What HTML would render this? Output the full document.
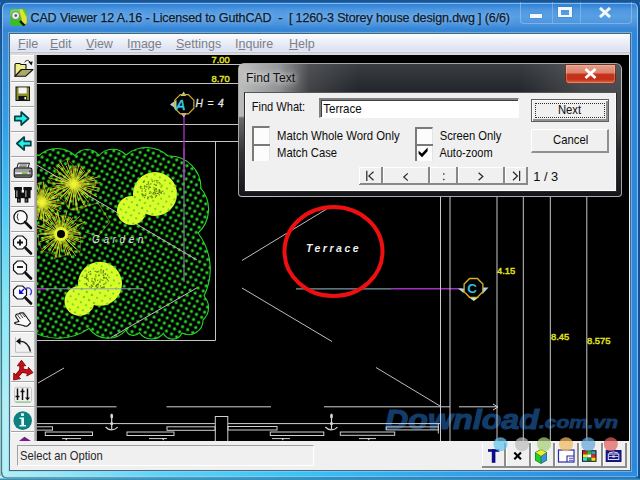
<!DOCTYPE html>
<html><head><meta charset="utf-8"><style>
*{margin:0;padding:0;box-sizing:border-box}
html,body{width:640px;height:480px;overflow:hidden;background:#1d5a9a}
body{position:relative;font-family:"Liberation Sans",sans-serif}
.a{position:absolute}
.menu{left:10px;top:34px;width:620px;height:19px;background:linear-gradient(to bottom,#fdfdff 0,#eef0f8 40%,#dde2f2 90%,#e4e8f6 100%);border-bottom:1px solid #c4c6ce;box-shadow:0 2px 0 #dadada}
.mi{top:37px;font-size:12.5px;color:#7a7f88;letter-spacing:0}
.mi u{text-decoration:underline;text-underline-offset:1px}
.draw{left:37px;top:55px;width:592px;height:386px;background:#000;overflow:hidden}
.status{left:10px;top:441px;width:620px;height:29px;background:#f0f0f0}
</style></head><body>
<svg class="a" style="left:0;top:0" width="640" height="480" viewBox="0 0 640 480">
 <defs>
  <linearGradient id="fgL" x1="0" y1="30" x2="0" y2="480" gradientUnits="userSpaceOnUse">
   <stop offset="0" stop-color="#3a86d6"/><stop offset="0.218" stop-color="#32a0eb"/><stop offset="0.387" stop-color="#46c8f5"/>
   <stop offset="0.596" stop-color="#84eaf4"/><stop offset="0.831" stop-color="#b0f0f5"/><stop offset="1" stop-color="#b4f0f5"/>
  </linearGradient>
  <linearGradient id="fgL0" x1="0" y1="30" x2="0" y2="480" gradientUnits="userSpaceOnUse">
   <stop offset="0" stop-color="#1a5a9a"/><stop offset="0.218" stop-color="#2878b4"/><stop offset="0.387" stop-color="#3c96be"/>
   <stop offset="0.596" stop-color="#64b4c8"/><stop offset="0.831" stop-color="#96c8cd"/><stop offset="1" stop-color="#98c8cc"/>
  </linearGradient>
  <linearGradient id="fgL1" x1="0" y1="30" x2="0" y2="480" gradientUnits="userSpaceOnUse">
   <stop offset="0" stop-color="#15508e"/><stop offset="0.218" stop-color="#15558e"/><stop offset="0.387" stop-color="#14648c"/>
   <stop offset="0.596" stop-color="#326e78"/><stop offset="0.831" stop-color="#468287"/><stop offset="1" stop-color="#4a7a80"/>
  </linearGradient>
  <linearGradient id="fgB" x1="0" y1="0" x2="1" y2="0">
   <stop offset="0" stop-color="#b4f0f5"/><stop offset="0.08" stop-color="#9ae8f6"/><stop offset="0.25" stop-color="#60d2f6"/>
   <stop offset="0.47" stop-color="#3cc2f5"/><stop offset="0.7" stop-color="#34a4ea"/><stop offset="0.9" stop-color="#2f8ee4"/><stop offset="1" stop-color="#2d8ae2"/>
  </linearGradient>
  <linearGradient id="fgBo" x1="0" y1="0" x2="1" y2="0">
   <stop offset="0" stop-color="#4a7a80"/><stop offset="0.3" stop-color="#2a7aa0"/><stop offset="0.5" stop-color="#14649a"/><stop offset="1" stop-color="#0c4a92"/>
  </linearGradient>
  <linearGradient id="fgT" x1="0" y1="0" x2="0" y2="33" gradientUnits="userSpaceOnUse">
   <stop offset="0" stop-color="#2a78cc"/><stop offset="0.15" stop-color="#3584d8"/><stop offset="0.3" stop-color="#4e98e0"/>
   <stop offset="0.5" stop-color="#58a0e4"/><stop offset="0.72" stop-color="#4c94de"/><stop offset="0.9" stop-color="#3486d6"/><stop offset="1" stop-color="#3a88d6"/>
  </linearGradient>
 </defs>
 <rect x="0" y="0" width="640" height="480" fill="#2e86de"/>
 <rect x="0" y="0" width="640" height="33" fill="url(#fgT)"/>
 <rect x="0" y="30" width="10" height="450" fill="url(#fgL)"/>
 <rect x="0" y="470" width="640" height="10" fill="url(#fgB)"/>
 <!-- outer outline -->
 <path d="M1 40 L1 8 Q1 1 8 1 L632 1 Q639 1 639 8 L639 480" fill="none" stroke="#15508e" stroke-width="2"/>
 <rect x="0" y="30" width="1" height="446" fill="url(#fgL0)"/>
 <rect x="1" y="30" width="1.2" height="444" fill="url(#fgL1)"/>
 <path d="M1.6 472 Q1.6 477.8 7 477.8 L640 477.8" fill="none" stroke="url(#fgBo)" stroke-width="1.3"/>
 <rect x="0" y="0" width="640" height="2.5" fill="#1a5596"/>
 <rect x="0" y="478.5" width="640" height="1.5" fill="#3a90b8"/>
 <!-- inner highlight -->
 <path d="M2.5 472 L2.5 9 Q2.5 3.5 8 3.5 L632 3.5 Q637.5 3.5 637.5 9 L637.5 476 M4 476.8 L636 476.8" fill="none" stroke="rgba(170,220,250,.65)" stroke-width="1"/>
 <path d="M8.5 32.5 L631.5 32.5 L631.5 471.5 L8.5 471.5 Z" fill="none" stroke="rgba(150,210,245,.55)" stroke-width="1"/>
</svg>
<div class="a" style="left:9px;top:33px;width:622px;height:438px;border:1px solid #4a6478;background:#f0f0f0"></div>
<!-- title icon -->
<svg class="a" style="left:10px;top:9px" width="17" height="17" viewBox="0 0 17 17">
 <rect x="0.3" y="0.3" width="16.4" height="16.4" rx="2.5" fill="#38c020"/>
 <path d="M0.3 3 Q0.3 0.3 3 0.3 L12 0.3 L12 7 Q6 9 0.3 7 Z" fill="#70d848"/>
 <path d="M9.5 0.3 L12.5 0.3 L16.7 8 L16.7 14 L13 16.7 Z" fill="#e8e030"/>
 <path d="M12.5 0.3 L14.5 0.3 L16.7 4 L16.7 8 Z" fill="#58c838"/>
 <path d="M10 12 L14.5 16.7" stroke="#111" stroke-width="2.4"/>
 <circle cx="5.6" cy="6.6" r="3.9" fill="#e8eee8" stroke="#7c8c7c" stroke-width="1.1"/>
 <circle cx="5.8" cy="6.6" r="1.3" fill="#505850"/>
</svg>
<div class="a" style="left:30.5px;top:10.5px;font-size:12.5px;letter-spacing:-0.12px;-webkit-text-stroke:0.25px #0c1a2c;color:#0c1a2c;white-space:nowrap;text-shadow:0 0 7px rgba(200,230,255,.55),0 0 3px rgba(200,230,255,.4)">CAD Viewer 12 A.16 - Licensed to GuthCAD&nbsp; - &nbsp;[ 1260-3 Storey house design.dwg ] (6/6)</div>

<!-- caption buttons -->
<div class="a" style="left:520px;top:2px;width:112px;height:22px;border:1px solid rgba(170,200,235,.55);border-top:none;border-radius:0 0 4px 4px"></div>
<div class="a" style="left:552px;top:2px;width:1px;height:21px;background:rgba(160,195,235,.5)"></div>
<div class="a" style="left:580px;top:2px;width:1px;height:21px;background:rgba(160,195,235,.5)"></div>
<div class="a" style="left:530px;top:14px;width:12px;height:4px;background:#f4f8fc;box-shadow:0 0 1px #345"></div>
<div class="a" style="left:558px;top:7px;width:14px;height:10px;border:3px solid #f4f8fc;border-top-width:3px;border-bottom-width:2px;box-shadow:0 0 1px #345"></div>
<svg class="a" style="left:598px;top:7px" width="14" height="11" viewBox="0 0 14 11"><path d="M2 1 L12 10 M12 1 L2 10" stroke="#f4f8fc" stroke-width="3"/></svg>

<!-- menu -->
<div class="a menu"></div>
<div class="a mi" style="left:18px"><u>F</u>ile</div>
<div class="a mi" style="left:50px"><u>E</u>dit</div>
<div class="a mi" style="left:86px"><u>V</u>iew</div>
<div class="a mi" style="left:127px">I<u>m</u>age</div>
<div class="a mi" style="left:176px"><u>S</u>ettings</div>
<div class="a mi" style="left:235px">I<u>n</u>quire</div>
<div class="a mi" style="left:289px"><u>H</u>elp</div>

<!-- toolbar -->
<!-- toolbar -->
<div class="a" style="left:10px;top:55px;width:27px;height:386px;background:#f1f1f1"></div>
<div class="a" style="left:10px;top:55px;width:1px;height:386px;background:#e4e4e4"></div>
<div class="a" style="left:34px;top:55px;width:3px;height:386px;background:linear-gradient(to right,#c8c8c8,#8c8c8c)"></div>
<div class="a" style="left:11px;top:55px;width:23px;height:1px;background:#fff"></div>
<div class="a" style="left:11px;top:81px;width:23px;height:1px;background:#a4a4a4"></div><div class="a" style="left:11px;top:82px;width:23px;height:1px;background:#fff"></div><div class="a" style="left:11px;top:106px;width:23px;height:1px;background:#a4a4a4"></div><div class="a" style="left:11px;top:107px;width:23px;height:1px;background:#fff"></div><div class="a" style="left:11px;top:131px;width:23px;height:1px;background:#a4a4a4"></div><div class="a" style="left:11px;top:132px;width:23px;height:1px;background:#fff"></div><div class="a" style="left:11px;top:156px;width:23px;height:1px;background:#a4a4a4"></div><div class="a" style="left:11px;top:157px;width:23px;height:1px;background:#fff"></div><div class="a" style="left:11px;top:181px;width:23px;height:1px;background:#a4a4a4"></div><div class="a" style="left:11px;top:182px;width:23px;height:1px;background:#fff"></div><div class="a" style="left:11px;top:206px;width:23px;height:1px;background:#a4a4a4"></div><div class="a" style="left:11px;top:207px;width:23px;height:1px;background:#fff"></div><div class="a" style="left:11px;top:231px;width:23px;height:1px;background:#a4a4a4"></div><div class="a" style="left:11px;top:232px;width:23px;height:1px;background:#fff"></div><div class="a" style="left:11px;top:256px;width:23px;height:1px;background:#a4a4a4"></div><div class="a" style="left:11px;top:257px;width:23px;height:1px;background:#fff"></div><div class="a" style="left:11px;top:281px;width:23px;height:1px;background:#a4a4a4"></div><div class="a" style="left:11px;top:282px;width:23px;height:1px;background:#fff"></div><div class="a" style="left:11px;top:306px;width:23px;height:1px;background:#a4a4a4"></div><div class="a" style="left:11px;top:307px;width:23px;height:1px;background:#fff"></div><div class="a" style="left:11px;top:331px;width:23px;height:1px;background:#a4a4a4"></div><div class="a" style="left:11px;top:332px;width:23px;height:1px;background:#fff"></div><div class="a" style="left:11px;top:356px;width:23px;height:1px;background:#a4a4a4"></div><div class="a" style="left:11px;top:357px;width:23px;height:1px;background:#fff"></div><div class="a" style="left:11px;top:381px;width:23px;height:1px;background:#a4a4a4"></div><div class="a" style="left:11px;top:382px;width:23px;height:1px;background:#fff"></div><div class="a" style="left:11px;top:406px;width:23px;height:1px;background:#a4a4a4"></div><div class="a" style="left:11px;top:407px;width:23px;height:1px;background:#fff"></div><div class="a" style="left:11px;top:431px;width:23px;height:1px;background:#a4a4a4"></div><div class="a" style="left:11px;top:432px;width:23px;height:1px;background:#fff"></div>
<svg class="a" style="left:11px;top:56px" width="24" height="386" viewBox="0 0 24 386">
 <!-- 0 open folder -->
 <g transform="translate(0,0)">
  <path d="M4 8.5 L4.8 7.5 L9 7.5 L9.8 8.5 L15 8.5 L15 13.5 L10.5 13.5 L4 20.3 Z" fill="#eded8a" stroke="#111" stroke-width="1.1" stroke-linejoin="round"/>
  <path d="M4 20.3 L10.5 13.5 L22 13.5 L14.5 20.3 Z" fill="#a8a868" stroke="#111" stroke-width="1.1" stroke-linejoin="round"/>
  <path d="M13.5 6.2 Q16.5 2.5 19.5 6.5" fill="none" stroke="#333" stroke-width="1"/>
  <path d="M17.5 6 L21.8 5.5 L20.5 9.5 Z" fill="#111"/>
 </g>
 <!-- 1 floppy -->
 <g transform="translate(0,25)">
  <rect x="4.5" y="5.5" width="14.5" height="14.5" fill="#111"/>
  <rect x="5.5" y="6.5" width="12.5" height="12.5" fill="#8c8c28"/>
  <rect x="7.5" y="6.5" width="8.2" height="6" fill="#f4f4f4"/>
  <rect x="7.5" y="15" width="8.2" height="4" fill="#111"/>
  <rect x="13.4" y="16" width="1.6" height="2.4" fill="#f4f4f4"/>
 </g>
 <!-- 2 right arrow -->
 <g transform="translate(0,50)">
  <path d="M3.8 10.3 L10.2 10.3 L10.2 6 L17.6 12.5 L10.2 19 L10.2 14.7 L3.8 14.7 Z" fill="#22f0f0" stroke="#0a4040" stroke-width="1.7" stroke-linejoin="round"/>
 </g>
 <!-- 3 left arrow -->
 <g transform="translate(0,75)">
  <path d="M19.8 10.3 L13.2 10.3 L13.2 6 L5.8 12.5 L13.2 19 L13.2 14.7 L19.8 14.7 Z" fill="#22f0f0" stroke="#0a4040" stroke-width="1.7" stroke-linejoin="round"/>
 </g>
 <!-- 4 printer -->
 <g transform="translate(0,100)">
  <path d="M7.3 7.2 L18.5 7.2 L16.8 12.3 L5.8 12.3 Z" fill="#f6f6f6" stroke="#111" stroke-width="1"/>
  <line x1="8.6" y1="9" x2="16.2" y2="9" stroke="#444" stroke-width="0.9"/>
  <line x1="8" y1="10.8" x2="15.6" y2="10.8" stroke="#444" stroke-width="0.9"/>
  <path d="M5 12 L19 12 Q21 12 21 14.5 L21 19 Q21 21.3 18.5 21.3 L5.5 21.3 Q3.2 21.3 3.2 19 L3.2 14.5 Q3.2 12 5 12 Z" fill="#9c9c9c" stroke="#111" stroke-width="1.1"/>
  <rect x="4.2" y="16.4" width="14" height="1.6" fill="#f0f0f0"/>
  <rect x="11" y="16.4" width="5.5" height="1.6" fill="#60c030"/>
  <rect x="4.2" y="18.2" width="16" height="2.4" fill="#505050"/>
  <circle cx="19" cy="15.2" r="1" fill="#444"/>
 </g>
 <!-- 5 binoculars -->
 <g transform="translate(0,125)" fill="#111">
  <rect x="3.2" y="6" width="7.8" height="3.2" rx="0.6"/>
  <rect x="12.4" y="6" width="8.4" height="3.2" rx="0.6"/>
  <rect x="4" y="9" width="15.6" height="8.2"/>
  <rect x="6" y="17" width="3.8" height="4.6"/>
  <rect x="13.6" y="17" width="3.8" height="4.6"/>
  <rect x="10.6" y="9" width="2.4" height="2.6" fill="#f4f4f4"/>
  <rect x="5.2" y="9.5" width="1.3" height="6.5" fill="#9a9a9a"/>
  <rect x="14.2" y="9.5" width="1.3" height="6.5" fill="#9a9a9a"/>
  <rect x="7.3" y="18" width="0.9" height="2.5" fill="#888"/>
  <rect x="14.8" y="18" width="0.9" height="2.5" fill="#888"/>
 </g>
 <!-- 6 zoom -->
 <g transform="translate(0,150)">
  <circle cx="9.5" cy="11.3" r="6.6" fill="#fafafa" stroke="#111" stroke-width="1.3"/>
  <path d="M7 7.5 Q5 11 7.5 14.5" fill="none" stroke="#333" stroke-width="1"/>
  <line x1="14" y1="16" x2="20" y2="22" stroke="#111" stroke-width="2.6" stroke-linecap="round"/>
 </g>
 <!-- 7 zoom in -->
 <g transform="translate(0,175)">
  <path d="M6.3 5 L11.7 5 L15.5 8.8 L15.5 14.2 L11.7 18 L6.3 18 L2.5 14.2 L2.5 8.8 Z" fill="#fafafa" stroke="#111" stroke-width="1.2"/>
  <path d="M6 11.5 L12 11.5 M9 8.5 L9 14.5" stroke="#111" stroke-width="1.8"/>
  <line x1="14.5" y1="17" x2="20" y2="22.5" stroke="#111" stroke-width="2.6" stroke-linecap="round"/>
 </g>
 <!-- 8 zoom out -->
 <g transform="translate(0,200)">
  <path d="M6.3 5 L11.7 5 L15.5 8.8 L15.5 14.2 L11.7 18 L6.3 18 L2.5 14.2 L2.5 8.8 Z" fill="#fafafa" stroke="#111" stroke-width="1.2"/>
  <path d="M6 11 L12 11" stroke="#111" stroke-width="1.8"/>
  <line x1="14.5" y1="17" x2="20" y2="22.5" stroke="#111" stroke-width="2.6" stroke-linecap="round"/>
 </g>
 <!-- 9 zoom window -->
 <g transform="translate(0,225)">
  <path d="M6.3 5 L11.7 5 L15.5 8.8 L15.5 14.2 L11.7 18 L6.3 18 L2.5 14.2 L2.5 8.8 Z" fill="#fafafa" stroke="#111" stroke-width="1.2"/>
  <path d="M8 8 L8 13 L13 13 Z" fill="#1010e0"/>
  <line x1="9" y1="12" x2="13" y2="8" stroke="#1010e0" stroke-width="1.5"/>
  <path d="M14 8 Q19 5 20.5 10 Q20.5 13 19 14" fill="none" stroke="#3030e0" stroke-width="1.3"/>
  <line x1="14.5" y1="17" x2="20" y2="22.5" stroke="#111" stroke-width="2.6" stroke-linecap="round"/>
 </g>
 <!-- 10 hand -->
 <g transform="translate(0,250)">
  <path d="M5 11 Q4 9 6 8 L8 8 Q9 6.5 11 7 Q12.5 6.5 13.5 8 L17 13 Q19.5 16 19.5 17 L17 19.5 Q15 21 12.5 19.5 L9 18.8 L5 18 Q3 17.5 4 16.5 L8 15.5 Z" fill="#fafafa" stroke="#111" stroke-width="1.1" stroke-linejoin="round"/>
  <path d="M6.5 9 L9.5 13 M9 8 L12 12 M11.5 7.8 L14 11" stroke="#333" stroke-width="0.9"/>
 </g>
 <!-- 11 undo -->
 <g transform="translate(0,275)">
  <path d="M4.5 6 L4.5 21.3 L21.5 21.3" fill="none" stroke="#c0c0c0" stroke-width="1"/>
  <path d="M8.5 10.3 Q17 10 19.5 20.5" fill="none" stroke="#222" stroke-width="1.4"/>
  <path d="M5 10.3 L9.5 6.8 L9.5 13.8 Z" fill="#111"/>
 </g>
 <!-- 12 red arrows -->
 <g transform="translate(0,300)">
  <g stroke="#7a0808" stroke-width="4.4" stroke-linecap="round"><line x1="10.5" y1="14.5" x2="10.5" y2="9"/><line x1="10.5" y1="14.5" x2="16.6" y2="15.6"/><line x1="10.5" y1="14.5" x2="6.4" y2="19.4"/></g>
  <path d="M6.3 9.8 L14.7 9.8 L10.5 4.2 Z M15.8 20 L17.4 11.3 L22 16.6 Z M9.6 22.6 L2.8 17 L2.6 23.9 Z" fill="#c8101a" stroke="#7a0808" stroke-width="0.9" stroke-linejoin="round"/>
  <g stroke="#c8101a" stroke-width="2.6" stroke-linecap="round"><line x1="10.5" y1="14.5" x2="10.5" y2="9.5"/><line x1="10.5" y1="14.5" x2="16.4" y2="15.6"/><line x1="10.5" y1="14.5" x2="6.8" y2="19"/></g>
 </g>
 <!-- 13 sliders -->
 <g transform="translate(0,325)">
  <rect x="3.5" y="6.3" width="17" height="15" rx="2" fill="none" stroke="#c8c8c8" stroke-width="1"/>
  <line x1="4.5" y1="21" x2="19.5" y2="21" stroke="#8ac88a" stroke-width="1.2"/>
  <g stroke="#111" stroke-width="1.5">
   <line x1="6.5" y1="7.5" x2="6.5" y2="19"/>
   <line x1="11.5" y1="7.5" x2="11.5" y2="19"/>
   <line x1="16.5" y1="7.5" x2="16.5" y2="17"/>
   <line x1="4.5" y1="15.5" x2="8.5" y2="15.5"/>
   <line x1="9.5" y1="10.5" x2="13.5" y2="10.5"/>
  </g>
  <path d="M14 16.5 L19 16.5 L16.5 19.5 Z" fill="#111"/>
 </g>
 <!-- 14 info -->
 <g transform="translate(0,350)">
  <circle cx="11.7" cy="14.6" r="9.3" fill="#0f8080"/>
  <rect x="10" y="7.3" width="3" height="2.6" fill="#dff"/>
  <path d="M8.5 11.5 L13 11.5 L13 19 L15 19 L15 20.5 L8.5 20.5 L8.5 19 L10.3 19 L10.3 13 L8.5 13 Z" fill="#e6ffff"/>
 </g>
 <!-- 15 purple -->
 <g transform="translate(0,375)">
  <path d="M8 10 L13.5 5.8 L20 10 Z" fill="#7a1a8a"/>
 </g>
</svg>


<!-- drawing -->
<div class="a draw">
<svg class="a" style="left:0;top:0" width="592" height="386" viewBox="37 55 592 386"><!-- watermark -->
<g font-family="Liberation Sans" font-weight="bold" font-style="italic" fill="#174a82" stroke="#174a82" opacity="0.82">
 <text x="385" y="429.3" font-size="27px" stroke-width="1.1" textLength="154" lengthAdjust="spacingAndGlyphs">Download</text>
 <text x="539" y="428.3" font-size="17px" stroke-width="0.8" textLength="79" lengthAdjust="spacingAndGlyphs">.com.vn</text>
</g>

<g fill="none" stroke-linecap="butt">
 <!-- top separator -->
 <!-- horizontal dim lines -->
 <g stroke="#c4c4c4" stroke-width="1">
  <line x1="37" y1="64.5" x2="600" y2="64.5"/>
  <line x1="37" y1="83.5" x2="600" y2="83.5"/>
  <line x1="37" y1="124.5" x2="600" y2="124.5"/>
  <line x1="37" y1="141.5" x2="600" y2="141.5"/>
  <line x1="215.5" y1="141" x2="215.5" y2="340.5"/>
  <line x1="37" y1="340.5" x2="215.5" y2="340.5"/>
 </g>
</g>
<g font-family="Liberation Sans" fill="#e0e020" stroke="#e0e020" stroke-width="0.45" font-size="9.4px">
 <text x="211.5" y="63">7.00</text>
 <text x="211.5" y="81.5">8.70</text>
 <text x="497" y="274">4.15</text>
 <text x="551" y="340">8.45</text>
 <text x="587" y="343.8">8.575</text>
</g>
<defs>
<pattern id="dots" width="5.9" height="5.9" patternUnits="userSpaceOnUse" patternTransform="rotate(30)"><circle cx="2.9" cy="2.9" r="1.6" fill="#26d426"/></pattern>
<pattern id="dots2" width="5.9" height="5.9" patternUnits="userSpaceOnUse" patternTransform="rotate(30)"><circle cx="2.9" cy="2.9" r="1.0" fill="#5ccc1c"/></pattern>
<clipPath id="gclip"><path d="M20.0 160.0 A17.4 17.4 0 0 1 39.0 155.5 A26.6 26.6 0 0 1 75.0 155.5 A15.0 15.0 0 0 1 99.0 155.5 A18.2 18.2 0 0 1 126.0 155.0 A31.6 31.6 0 0 1 168.0 156.0 A31.8 31.8 0 0 1 201.0 188.5 A32.1 32.1 0 0 1 198.0 233.0 A60.1 60.1 0 0 1 204.0 296.0 A16.9 16.9 0 0 1 203.0 320.0 A14.4 14.4 0 0 1 182.0 333.0 A10.3 10.3 0 0 1 163.3 333.3 A14.9 14.9 0 0 1 139.4 332.6 A7.8 7.8 0 0 1 126.0 330.0 A23.5 23.5 0 0 1 89.0 328.4 A52.9 52.9 0 0 1 30.0 330.0 A13.0 13.0 0 0 1 20.0 330.0 Z"/></clipPath>
</defs>
<path d="M20.0 160.0 A17.4 17.4 0 0 1 39.0 155.5 A26.6 26.6 0 0 1 75.0 155.5 A15.0 15.0 0 0 1 99.0 155.5 A18.2 18.2 0 0 1 126.0 155.0 A31.6 31.6 0 0 1 168.0 156.0 A31.8 31.8 0 0 1 201.0 188.5 A32.1 32.1 0 0 1 198.0 233.0 A60.1 60.1 0 0 1 204.0 296.0 A16.9 16.9 0 0 1 203.0 320.0 A14.4 14.4 0 0 1 182.0 333.0 A10.3 10.3 0 0 1 163.3 333.3 A14.9 14.9 0 0 1 139.4 332.6 A7.8 7.8 0 0 1 126.0 330.0 A23.5 23.5 0 0 1 89.0 328.4 A52.9 52.9 0 0 1 30.0 330.0 A13.0 13.0 0 0 1 20.0 330.0 Z" fill="url(#dots)" stroke="#28d828" stroke-width="1.1"/>
<g stroke="#bdbdbd" stroke-width="1"><line x1="37" y1="165" x2="197" y2="260"/><line x1="197.5" y1="287.5" x2="111" y2="337.5"/></g>
<g><circle cx="155" cy="194" r="22" fill="#d8fc2a"/><circle cx="131.5" cy="210.5" r="14.5" fill="#d8fc2a"/>
<circle cx="155" cy="194" r="22" fill="url(#dots2)"/><circle cx="131.5" cy="210.5" r="14.5" fill="url(#dots2)"/></g>
<rect x="148.9" y="192.8" width="1.2" height="1.2" fill="#4a6a10" opacity="0.85"/>
<rect x="149.1" y="186.6" width="1.2" height="1.2" fill="#4a6a10" opacity="0.85"/>
<rect x="143.9" y="187.6" width="1.2" height="1.2" fill="#4a6a10" opacity="0.85"/>
<rect x="159.0" y="191.7" width="1.2" height="1.2" fill="#4a6a10" opacity="0.85"/>
<rect x="158.7" y="190.7" width="1.2" height="1.2" fill="#4a6a10" opacity="0.85"/>
<rect x="154.3" y="190.4" width="1.2" height="1.2" fill="#4a6a10" opacity="0.85"/>
<rect x="141.3" y="193.5" width="1.2" height="1.2" fill="#4a6a10" opacity="0.85"/>
<rect x="155.0" y="192.6" width="1.2" height="1.2" fill="#4a6a10" opacity="0.85"/>
<rect x="142.9" y="181.5" width="1.2" height="1.2" fill="#4a6a10" opacity="0.85"/>
<rect x="144.3" y="185.8" width="1.2" height="1.2" fill="#4a6a10" opacity="0.85"/>
<rect x="153.6" y="188.6" width="1.2" height="1.2" fill="#4a6a10" opacity="0.85"/>
<rect x="155.1" y="184.5" width="1.2" height="1.2" fill="#4a6a10" opacity="0.85"/>
<rect x="153.5" y="191.9" width="1.2" height="1.2" fill="#4a6a10" opacity="0.85"/>
<rect x="147.1" y="198.1" width="1.2" height="1.2" fill="#4a6a10" opacity="0.85"/>
<rect x="154.9" y="196.5" width="1.2" height="1.2" fill="#4a6a10" opacity="0.85"/>
<rect x="146.3" y="184.0" width="1.2" height="1.2" fill="#4a6a10" opacity="0.85"/>
<rect x="148.1" y="188.2" width="1.2" height="1.2" fill="#4a6a10" opacity="0.85"/>
<rect x="156.1" y="190.8" width="1.2" height="1.2" fill="#4a6a10" opacity="0.85"/>
<rect x="147.7" y="182.6" width="1.2" height="1.2" fill="#4a6a10" opacity="0.85"/>
<rect x="147.4" y="196.6" width="1.2" height="1.2" fill="#4a6a10" opacity="0.85"/>
<rect x="144.7" y="190.7" width="1.2" height="1.2" fill="#4a6a10" opacity="0.85"/>
<rect x="153.7" y="180.3" width="1.2" height="1.2" fill="#4a6a10" opacity="0.85"/>
<rect x="151.3" y="197.2" width="1.2" height="1.2" fill="#4a6a10" opacity="0.85"/>
<rect x="139.9" y="187.4" width="1.2" height="1.2" fill="#4a6a10" opacity="0.85"/>
<rect x="150.2" y="183.3" width="1.2" height="1.2" fill="#4a6a10" opacity="0.85"/>
<rect x="155.1" y="188.5" width="1.2" height="1.2" fill="#4a6a10" opacity="0.85"/>
<rect x="141.9" y="193.6" width="1.2" height="1.2" fill="#4a6a10" opacity="0.85"/>
<rect x="155.9" y="195.2" width="1.2" height="1.2" fill="#4a6a10" opacity="0.85"/>
<rect x="160.5" y="191.2" width="1.2" height="1.2" fill="#4a6a10" opacity="0.85"/>
<rect x="151.8" y="180.9" width="1.2" height="1.2" fill="#4a6a10" opacity="0.85"/>
<rect x="155.8" y="184.7" width="1.2" height="1.2" fill="#4a6a10" opacity="0.85"/>
<rect x="147.9" y="181.2" width="1.2" height="1.2" fill="#4a6a10" opacity="0.85"/>
<rect x="143.9" y="185.5" width="1.2" height="1.2" fill="#4a6a10" opacity="0.85"/>
<rect x="157.2" y="180.1" width="1.2" height="1.2" fill="#4a6a10" opacity="0.85"/>
<rect x="141.4" y="190.4" width="1.2" height="1.2" fill="#4a6a10" opacity="0.85"/>
<rect x="160.3" y="192.4" width="1.2" height="1.2" fill="#4a6a10" opacity="0.85"/>
<rect x="143.8" y="180.4" width="1.2" height="1.2" fill="#4a6a10" opacity="0.85"/>
<rect x="153.8" y="183.8" width="1.2" height="1.2" fill="#4a6a10" opacity="0.85"/>
<rect x="143.6" y="194.8" width="1.2" height="1.2" fill="#4a6a10" opacity="0.85"/>
<rect x="159.1" y="190.0" width="1.2" height="1.2" fill="#4a6a10" opacity="0.85"/>
<rect x="153.0" y="192.2" width="1.2" height="1.2" fill="#4a6a10" opacity="0.85"/>
<rect x="160.8" y="192.4" width="1.2" height="1.2" fill="#4a6a10" opacity="0.85"/>
<rect x="155.1" y="192.9" width="1.2" height="1.2" fill="#4a6a10" opacity="0.85"/>
<rect x="142.3" y="195.4" width="1.2" height="1.2" fill="#4a6a10" opacity="0.85"/>
<rect x="158.0" y="192.5" width="1.2" height="1.2" fill="#4a6a10" opacity="0.85"/>
<rect x="140.3" y="185.9" width="1.2" height="1.2" fill="#4a6a10" opacity="0.85"/>
<rect x="155.7" y="179.9" width="1.2" height="1.2" fill="#4a6a10" opacity="0.85"/>
<rect x="149.6" y="195.9" width="1.2" height="1.2" fill="#4a6a10" opacity="0.85"/>
<rect x="143.9" y="196.9" width="1.2" height="1.2" fill="#4a6a10" opacity="0.85"/>
<rect x="155.5" y="187.9" width="1.2" height="1.2" fill="#4a6a10" opacity="0.85"/>
<rect x="153.6" y="193.7" width="1.2" height="1.2" fill="#4a6a10" opacity="0.85"/>
<rect x="151.9" y="196.5" width="1.2" height="1.2" fill="#4a6a10" opacity="0.85"/>
<rect x="145.8" y="186.1" width="1.2" height="1.2" fill="#4a6a10" opacity="0.85"/>
<rect x="158.8" y="189.2" width="1.2" height="1.2" fill="#4a6a10" opacity="0.85"/>
<rect x="144.9" y="195.0" width="1.2" height="1.2" fill="#4a6a10" opacity="0.85"/>
<rect x="160.5" y="186.4" width="1.2" height="1.2" fill="#4a6a10" opacity="0.85"/>
<rect x="141.6" y="188.2" width="1.2" height="1.2" fill="#4a6a10" opacity="0.85"/>
<rect x="149.7" y="186.8" width="1.2" height="1.2" fill="#4a6a10" opacity="0.85"/>
<rect x="159.5" y="183.3" width="1.2" height="1.2" fill="#4a6a10" opacity="0.85"/>
<rect x="158.5" y="182.1" width="1.2" height="1.2" fill="#4a6a10" opacity="0.85"/>
<rect x="145.1" y="193.3" width="1.2" height="1.2" fill="#4a6a10" opacity="0.85"/>
<rect x="158.6" y="194.2" width="1.2" height="1.2" fill="#4a6a10" opacity="0.85"/>
<rect x="153.9" y="190.1" width="1.2" height="1.2" fill="#4a6a10" opacity="0.85"/>
<rect x="152.2" y="193.2" width="1.2" height="1.2" fill="#4a6a10" opacity="0.85"/>
<rect x="149.5" y="191.1" width="1.2" height="1.2" fill="#4a6a10" opacity="0.85"/>
<rect x="155.7" y="189.0" width="1.2" height="1.2" fill="#4a6a10" opacity="0.85"/>
<rect x="156.8" y="192.9" width="1.2" height="1.2" fill="#4a6a10" opacity="0.85"/>
<rect x="162.1" y="190.6" width="1.2" height="1.2" fill="#4a6a10" opacity="0.85"/>
<rect x="147.5" y="186.3" width="1.2" height="1.2" fill="#4a6a10" opacity="0.85"/>
<rect x="150.9" y="195.4" width="1.2" height="1.2" fill="#4a6a10" opacity="0.85"/>
<g><circle cx="100" cy="283.8" r="22" fill="#d8fc2a"/><circle cx="79.5" cy="301" r="15" fill="#d8fc2a"/>
<circle cx="100" cy="283.8" r="22" fill="url(#dots2)"/><circle cx="79.5" cy="301" r="15" fill="url(#dots2)"/></g>
<rect x="93.2" y="281.7" width="1.2" height="1.2" fill="#4a6a10" opacity="0.85"/>
<rect x="102.9" y="270.0" width="1.2" height="1.2" fill="#4a6a10" opacity="0.85"/>
<rect x="87.8" y="280.4" width="1.2" height="1.2" fill="#4a6a10" opacity="0.85"/>
<rect x="99.3" y="280.6" width="1.2" height="1.2" fill="#4a6a10" opacity="0.85"/>
<rect x="92.6" y="283.4" width="1.2" height="1.2" fill="#4a6a10" opacity="0.85"/>
<rect x="98.3" y="275.0" width="1.2" height="1.2" fill="#4a6a10" opacity="0.85"/>
<rect x="107.6" y="280.3" width="1.2" height="1.2" fill="#4a6a10" opacity="0.85"/>
<rect x="91.5" y="278.1" width="1.2" height="1.2" fill="#4a6a10" opacity="0.85"/>
<rect x="94.1" y="278.3" width="1.2" height="1.2" fill="#4a6a10" opacity="0.85"/>
<rect x="84.3" y="276.9" width="1.2" height="1.2" fill="#4a6a10" opacity="0.85"/>
<rect x="102.5" y="272.0" width="1.2" height="1.2" fill="#4a6a10" opacity="0.85"/>
<rect x="95.5" y="285.3" width="1.2" height="1.2" fill="#4a6a10" opacity="0.85"/>
<rect x="101.3" y="287.0" width="1.2" height="1.2" fill="#4a6a10" opacity="0.85"/>
<rect x="85.6" y="276.9" width="1.2" height="1.2" fill="#4a6a10" opacity="0.85"/>
<rect x="93.3" y="283.3" width="1.2" height="1.2" fill="#4a6a10" opacity="0.85"/>
<rect x="100.5" y="268.9" width="1.2" height="1.2" fill="#4a6a10" opacity="0.85"/>
<rect x="102.5" y="271.0" width="1.2" height="1.2" fill="#4a6a10" opacity="0.85"/>
<rect x="100.3" y="270.3" width="1.2" height="1.2" fill="#4a6a10" opacity="0.85"/>
<rect x="97.3" y="286.5" width="1.2" height="1.2" fill="#4a6a10" opacity="0.85"/>
<rect x="94.7" y="280.3" width="1.2" height="1.2" fill="#4a6a10" opacity="0.85"/>
<rect x="102.2" y="279.8" width="1.2" height="1.2" fill="#4a6a10" opacity="0.85"/>
<rect x="95.4" y="287.8" width="1.2" height="1.2" fill="#4a6a10" opacity="0.85"/>
<rect x="103.7" y="276.8" width="1.2" height="1.2" fill="#4a6a10" opacity="0.85"/>
<rect x="107.0" y="274.6" width="1.2" height="1.2" fill="#4a6a10" opacity="0.85"/>
<rect x="103.0" y="277.0" width="1.2" height="1.2" fill="#4a6a10" opacity="0.85"/>
<rect x="97.1" y="283.9" width="1.2" height="1.2" fill="#4a6a10" opacity="0.85"/>
<rect x="97.8" y="283.4" width="1.2" height="1.2" fill="#4a6a10" opacity="0.85"/>
<rect x="87.9" y="271.6" width="1.2" height="1.2" fill="#4a6a10" opacity="0.85"/>
<rect x="100.5" y="272.5" width="1.2" height="1.2" fill="#4a6a10" opacity="0.85"/>
<rect x="89.8" y="270.9" width="1.2" height="1.2" fill="#4a6a10" opacity="0.85"/>
<rect x="104.4" y="283.3" width="1.2" height="1.2" fill="#4a6a10" opacity="0.85"/>
<rect x="104.9" y="273.6" width="1.2" height="1.2" fill="#4a6a10" opacity="0.85"/>
<rect x="96.0" y="271.3" width="1.2" height="1.2" fill="#4a6a10" opacity="0.85"/>
<rect x="100.6" y="287.4" width="1.2" height="1.2" fill="#4a6a10" opacity="0.85"/>
<rect x="90.7" y="287.2" width="1.2" height="1.2" fill="#4a6a10" opacity="0.85"/>
<rect x="103.4" y="277.6" width="1.2" height="1.2" fill="#4a6a10" opacity="0.85"/>
<rect x="86.5" y="284.9" width="1.2" height="1.2" fill="#4a6a10" opacity="0.85"/>
<rect x="95.2" y="274.4" width="1.2" height="1.2" fill="#4a6a10" opacity="0.85"/>
<rect x="99.3" y="281.8" width="1.2" height="1.2" fill="#4a6a10" opacity="0.85"/>
<rect x="104.9" y="273.3" width="1.2" height="1.2" fill="#4a6a10" opacity="0.85"/>
<rect x="102.6" y="286.6" width="1.2" height="1.2" fill="#4a6a10" opacity="0.85"/>
<rect x="105.7" y="277.7" width="1.2" height="1.2" fill="#4a6a10" opacity="0.85"/>
<rect x="90.8" y="285.3" width="1.2" height="1.2" fill="#4a6a10" opacity="0.85"/>
<rect x="97.0" y="279.7" width="1.2" height="1.2" fill="#4a6a10" opacity="0.85"/>
<rect x="105.5" y="277.2" width="1.2" height="1.2" fill="#4a6a10" opacity="0.85"/>
<rect x="84.6" y="277.1" width="1.2" height="1.2" fill="#4a6a10" opacity="0.85"/>
<rect x="85.8" y="282.9" width="1.2" height="1.2" fill="#4a6a10" opacity="0.85"/>
<rect x="98.5" y="274.4" width="1.2" height="1.2" fill="#4a6a10" opacity="0.85"/>
<rect x="95.9" y="284.6" width="1.2" height="1.2" fill="#4a6a10" opacity="0.85"/>
<rect x="96.6" y="287.1" width="1.2" height="1.2" fill="#4a6a10" opacity="0.85"/>
<rect x="95.5" y="285.8" width="1.2" height="1.2" fill="#4a6a10" opacity="0.85"/>
<rect x="103.8" y="286.4" width="1.2" height="1.2" fill="#4a6a10" opacity="0.85"/>
<rect x="91.1" y="284.6" width="1.2" height="1.2" fill="#4a6a10" opacity="0.85"/>
<rect x="86.1" y="273.7" width="1.2" height="1.2" fill="#4a6a10" opacity="0.85"/>
<rect x="85.9" y="283.8" width="1.2" height="1.2" fill="#4a6a10" opacity="0.85"/>
<rect x="87.2" y="278.7" width="1.2" height="1.2" fill="#4a6a10" opacity="0.85"/>
<rect x="94.4" y="278.6" width="1.2" height="1.2" fill="#4a6a10" opacity="0.85"/>
<rect x="91.2" y="280.5" width="1.2" height="1.2" fill="#4a6a10" opacity="0.85"/>
<rect x="106.7" y="279.0" width="1.2" height="1.2" fill="#4a6a10" opacity="0.85"/>
<rect x="99.9" y="285.4" width="1.2" height="1.2" fill="#4a6a10" opacity="0.85"/>
<rect x="94.6" y="270.8" width="1.2" height="1.2" fill="#4a6a10" opacity="0.85"/>
<rect x="92.0" y="285.7" width="1.2" height="1.2" fill="#4a6a10" opacity="0.85"/>
<rect x="86.0" y="275.6" width="1.2" height="1.2" fill="#4a6a10" opacity="0.85"/>
<rect x="103.1" y="283.8" width="1.2" height="1.2" fill="#4a6a10" opacity="0.85"/>
<rect x="96.1" y="284.5" width="1.2" height="1.2" fill="#4a6a10" opacity="0.85"/>
<rect x="97.2" y="271.2" width="1.2" height="1.2" fill="#4a6a10" opacity="0.85"/>
<rect x="86.3" y="275.3" width="1.2" height="1.2" fill="#4a6a10" opacity="0.85"/>
<rect x="102.8" y="275.0" width="1.2" height="1.2" fill="#4a6a10" opacity="0.85"/>
<rect x="89.5" y="273.8" width="1.2" height="1.2" fill="#4a6a10" opacity="0.85"/>
<rect x="86.0" y="278.1" width="1.2" height="1.2" fill="#4a6a10" opacity="0.85"/>
<g stroke="#e4e428" stroke-width="0.8">
<line x1="74.0" y1="184.0" x2="95.9" y2="185.0"/>
<line x1="74.0" y1="184.0" x2="100.0" y2="188.2"/>
<line x1="74.0" y1="184.0" x2="98.6" y2="191.4"/>
<line x1="74.0" y1="184.0" x2="91.3" y2="191.9"/>
<line x1="74.0" y1="184.0" x2="97.1" y2="196.8"/>
<line x1="74.0" y1="184.0" x2="88.1" y2="194.6"/>
<line x1="74.0" y1="184.0" x2="90.2" y2="197.3"/>
<line x1="74.0" y1="184.0" x2="87.2" y2="197.4"/>
<line x1="74.0" y1="184.0" x2="88.5" y2="202.4"/>
<line x1="74.0" y1="184.0" x2="86.0" y2="206.9"/>
<line x1="74.0" y1="184.0" x2="84.1" y2="205.7"/>
<line x1="74.0" y1="184.0" x2="78.7" y2="201.1"/>
<line x1="74.0" y1="184.0" x2="77.6" y2="210.4"/>
<line x1="74.0" y1="184.0" x2="76.4" y2="210.4"/>
<line x1="74.0" y1="184.0" x2="73.1" y2="205.4"/>
<line x1="74.0" y1="184.0" x2="68.7" y2="208.6"/>
<line x1="74.0" y1="184.0" x2="69.0" y2="204.3"/>
<line x1="74.0" y1="184.0" x2="66.5" y2="202.4"/>
<line x1="74.0" y1="184.0" x2="65.1" y2="201.5"/>
<line x1="74.0" y1="184.0" x2="64.3" y2="197.2"/>
<line x1="74.0" y1="184.0" x2="60.0" y2="199.6"/>
<line x1="74.0" y1="184.0" x2="60.0" y2="198.0"/>
<line x1="74.0" y1="184.0" x2="56.2" y2="196.5"/>
<line x1="74.0" y1="184.0" x2="51.2" y2="198.1"/>
<line x1="74.0" y1="184.0" x2="49.1" y2="193.7"/>
<line x1="74.0" y1="184.0" x2="55.9" y2="190.1"/>
<line x1="74.0" y1="184.0" x2="50.0" y2="189.4"/>
<line x1="74.0" y1="184.0" x2="56.5" y2="185.5"/>
<line x1="74.0" y1="184.0" x2="48.0" y2="182.9"/>
<line x1="74.0" y1="184.0" x2="55.4" y2="180.3"/>
<line x1="74.0" y1="184.0" x2="48.6" y2="177.8"/>
<line x1="74.0" y1="184.0" x2="52.1" y2="174.9"/>
<line x1="74.0" y1="184.0" x2="58.9" y2="176.6"/>
<line x1="74.0" y1="184.0" x2="57.2" y2="171.8"/>
<line x1="74.0" y1="184.0" x2="53.5" y2="167.4"/>
<line x1="74.0" y1="184.0" x2="57.6" y2="165.3"/>
<line x1="74.0" y1="184.0" x2="58.3" y2="164.0"/>
<line x1="74.0" y1="184.0" x2="60.6" y2="162.3"/>
<line x1="74.0" y1="184.0" x2="66.2" y2="165.7"/>
<line x1="74.0" y1="184.0" x2="66.7" y2="158.8"/>
<line x1="74.0" y1="184.0" x2="70.5" y2="166.7"/>
<line x1="74.0" y1="184.0" x2="72.9" y2="165.3"/>
<line x1="74.0" y1="184.0" x2="74.2" y2="166.1"/>
<line x1="74.0" y1="184.0" x2="76.1" y2="165.7"/>
<line x1="74.0" y1="184.0" x2="78.9" y2="165.1"/>
<line x1="74.0" y1="184.0" x2="81.8" y2="166.3"/>
<line x1="74.0" y1="184.0" x2="82.7" y2="168.1"/>
<line x1="74.0" y1="184.0" x2="83.2" y2="170.4"/>
<line x1="74.0" y1="184.0" x2="84.5" y2="171.5"/>
<line x1="74.0" y1="184.0" x2="90.8" y2="169.5"/>
<line x1="74.0" y1="184.0" x2="90.9" y2="171.0"/>
<line x1="74.0" y1="184.0" x2="89.5" y2="176.2"/>
<line x1="74.0" y1="184.0" x2="93.5" y2="176.5"/>
<line x1="74.0" y1="184.0" x2="98.2" y2="176.9"/>
<line x1="74.0" y1="184.0" x2="95.3" y2="180.0"/>
<line x1="74.0" y1="184.0" x2="100.8" y2="182.8"/>
</g>
<path d="M95.9 185.0 L91.3 191.9 L90.2 197.3 L86.0 206.9 L77.6 210.4 L68.7 208.6 L65.1 201.5 L60.0 198.0 L49.1 193.7 L56.5 185.5 L48.6 177.8 L57.2 171.8 L58.3 164.0 L66.7 158.8 L74.2 166.1 L81.8 166.3 L84.5 171.5 L89.5 176.2 L95.3 180.0 Z" fill="none" stroke="#e4e428" stroke-width="0.6" opacity="0.6"/>
<circle cx="74" cy="184" r="5" fill="#e8f030" opacity="0.55"/>
<circle cx="74" cy="184" r="2.5" fill="#f0f040"/>
<g stroke="#e4e428" stroke-width="0.8">
<line x1="42.0" y1="202.5" x2="63.4" y2="203.2"/>
<line x1="42.0" y1="202.5" x2="61.3" y2="206.1"/>
<line x1="42.0" y1="202.5" x2="58.4" y2="206.9"/>
<line x1="42.0" y1="202.5" x2="56.1" y2="207.5"/>
<line x1="42.0" y1="202.5" x2="60.5" y2="211.6"/>
<line x1="42.0" y1="202.5" x2="54.7" y2="211.0"/>
<line x1="42.0" y1="202.5" x2="58.7" y2="216.1"/>
<line x1="42.0" y1="202.5" x2="54.8" y2="217.8"/>
<line x1="42.0" y1="202.5" x2="51.6" y2="215.3"/>
<line x1="42.0" y1="202.5" x2="51.1" y2="218.0"/>
<line x1="42.0" y1="202.5" x2="49.5" y2="218.7"/>
<line x1="42.0" y1="202.5" x2="48.9" y2="224.1"/>
<line x1="42.0" y1="202.5" x2="44.4" y2="221.2"/>
<line x1="42.0" y1="202.5" x2="44.0" y2="225.1"/>
<line x1="42.0" y1="202.5" x2="41.5" y2="219.6"/>
<line x1="42.0" y1="202.5" x2="40.1" y2="219.7"/>
<line x1="42.0" y1="202.5" x2="37.1" y2="220.2"/>
<line x1="42.0" y1="202.5" x2="35.6" y2="219.8"/>
<line x1="42.0" y1="202.5" x2="35.0" y2="217.1"/>
<line x1="42.0" y1="202.5" x2="32.6" y2="217.2"/>
<line x1="42.0" y1="202.5" x2="33.2" y2="213.4"/>
<line x1="42.0" y1="202.5" x2="30.4" y2="213.4"/>
<line x1="42.0" y1="202.5" x2="26.7" y2="213.3"/>
<line x1="42.0" y1="202.5" x2="24.4" y2="211.8"/>
<line x1="42.0" y1="202.5" x2="21.7" y2="210.6"/>
<line x1="42.0" y1="202.5" x2="25.9" y2="207.4"/>
<line x1="42.0" y1="202.5" x2="26.9" y2="204.4"/>
<line x1="42.0" y1="202.5" x2="22.3" y2="203.3"/>
<line x1="42.0" y1="202.5" x2="20.5" y2="202.4"/>
<line x1="42.0" y1="202.5" x2="22.8" y2="198.6"/>
<line x1="42.0" y1="202.5" x2="21.7" y2="196.3"/>
<line x1="42.0" y1="202.5" x2="24.5" y2="196.1"/>
<line x1="42.0" y1="202.5" x2="23.1" y2="192.2"/>
<line x1="42.0" y1="202.5" x2="24.9" y2="189.7"/>
<line x1="42.0" y1="202.5" x2="25.6" y2="187.8"/>
<line x1="42.0" y1="202.5" x2="28.7" y2="187.3"/>
<line x1="42.0" y1="202.5" x2="33.5" y2="191.3"/>
<line x1="42.0" y1="202.5" x2="33.1" y2="187.9"/>
<line x1="42.0" y1="202.5" x2="32.9" y2="183.0"/>
<line x1="42.0" y1="202.5" x2="36.6" y2="183.7"/>
<line x1="42.0" y1="202.5" x2="38.8" y2="182.7"/>
<line x1="42.0" y1="202.5" x2="41.1" y2="188.7"/>
<line x1="42.0" y1="202.5" x2="43.6" y2="181.9"/>
<line x1="42.0" y1="202.5" x2="45.0" y2="184.0"/>
<line x1="42.0" y1="202.5" x2="46.1" y2="188.7"/>
<line x1="42.0" y1="202.5" x2="48.4" y2="187.7"/>
<line x1="42.0" y1="202.5" x2="49.2" y2="187.9"/>
<line x1="42.0" y1="202.5" x2="51.3" y2="189.9"/>
<line x1="42.0" y1="202.5" x2="57.5" y2="185.8"/>
<line x1="42.0" y1="202.5" x2="54.8" y2="190.9"/>
<line x1="42.0" y1="202.5" x2="58.3" y2="190.7"/>
<line x1="42.0" y1="202.5" x2="59.2" y2="193.4"/>
<line x1="42.0" y1="202.5" x2="55.5" y2="197.1"/>
<line x1="42.0" y1="202.5" x2="57.3" y2="197.4"/>
<line x1="42.0" y1="202.5" x2="58.4" y2="200.0"/>
<line x1="42.0" y1="202.5" x2="55.9" y2="201.7"/>
</g>
<path d="M63.4 203.2 L56.1 207.5 L58.7 216.1 L51.1 218.0 L44.4 221.2 L40.1 219.7 L35.0 217.1 L30.4 213.4 L21.7 210.6 L22.3 203.3 L21.7 196.3 L24.9 189.7 L33.5 191.3 L36.6 183.7 L43.6 181.9 L48.4 187.7 L57.5 185.8 L59.2 193.4 L58.4 200.0 Z" fill="none" stroke="#e4e428" stroke-width="0.6" opacity="0.6"/>
<circle cx="42" cy="202.5" r="5" fill="#e8f030" opacity="0.55"/>
<circle cx="42" cy="202.5" r="2.5" fill="#f0f040"/>
<g stroke="#e4e428" stroke-width="0.8">
<line x1="61.0" y1="234.0" x2="80.1" y2="234.1"/>
<line x1="61.0" y1="234.0" x2="84.3" y2="238.2"/>
<line x1="61.0" y1="234.0" x2="79.5" y2="239.6"/>
<line x1="61.0" y1="234.0" x2="80.6" y2="242.0"/>
<line x1="61.0" y1="234.0" x2="76.4" y2="242.3"/>
<line x1="61.0" y1="234.0" x2="75.6" y2="245.1"/>
<line x1="61.0" y1="234.0" x2="79.9" y2="252.3"/>
<line x1="61.0" y1="234.0" x2="75.9" y2="249.0"/>
<line x1="61.0" y1="234.0" x2="75.9" y2="256.1"/>
<line x1="61.0" y1="234.0" x2="70.4" y2="250.6"/>
<line x1="61.0" y1="234.0" x2="72.0" y2="258.0"/>
<line x1="61.0" y1="234.0" x2="68.0" y2="255.4"/>
<line x1="61.0" y1="234.0" x2="65.6" y2="255.4"/>
<line x1="61.0" y1="234.0" x2="61.3" y2="251.6"/>
<line x1="61.0" y1="234.0" x2="59.2" y2="255.6"/>
<line x1="61.0" y1="234.0" x2="56.3" y2="257.3"/>
<line x1="61.0" y1="234.0" x2="54.7" y2="259.1"/>
<line x1="61.0" y1="234.0" x2="54.8" y2="249.3"/>
<line x1="61.0" y1="234.0" x2="51.7" y2="253.4"/>
<line x1="61.0" y1="234.0" x2="49.9" y2="250.0"/>
<line x1="61.0" y1="234.0" x2="48.4" y2="249.4"/>
<line x1="61.0" y1="234.0" x2="42.6" y2="251.3"/>
<line x1="61.0" y1="234.0" x2="42.0" y2="249.2"/>
<line x1="61.0" y1="234.0" x2="45.5" y2="242.0"/>
<line x1="61.0" y1="234.0" x2="38.6" y2="242.3"/>
<line x1="61.0" y1="234.0" x2="42.3" y2="238.7"/>
<line x1="61.0" y1="234.0" x2="40.9" y2="237.8"/>
<line x1="61.0" y1="234.0" x2="38.4" y2="234.3"/>
<line x1="61.0" y1="234.0" x2="40.2" y2="233.2"/>
<line x1="61.0" y1="234.0" x2="44.4" y2="231.7"/>
<line x1="61.0" y1="234.0" x2="36.5" y2="228.1"/>
<line x1="61.0" y1="234.0" x2="36.4" y2="224.6"/>
<line x1="61.0" y1="234.0" x2="44.0" y2="225.3"/>
<line x1="61.0" y1="234.0" x2="46.1" y2="223.5"/>
<line x1="61.0" y1="234.0" x2="40.9" y2="216.7"/>
<line x1="61.0" y1="234.0" x2="45.0" y2="214.9"/>
<line x1="61.0" y1="234.0" x2="46.1" y2="212.6"/>
<line x1="61.0" y1="234.0" x2="51.0" y2="214.2"/>
<line x1="61.0" y1="234.0" x2="54.8" y2="218.4"/>
<line x1="61.0" y1="234.0" x2="55.5" y2="213.7"/>
<line x1="61.0" y1="234.0" x2="57.6" y2="211.1"/>
<line x1="61.0" y1="234.0" x2="59.6" y2="217.3"/>
<line x1="61.0" y1="234.0" x2="62.6" y2="216.5"/>
<line x1="61.0" y1="234.0" x2="64.2" y2="214.3"/>
<line x1="61.0" y1="234.0" x2="67.1" y2="210.6"/>
<line x1="61.0" y1="234.0" x2="69.0" y2="216.8"/>
<line x1="61.0" y1="234.0" x2="70.6" y2="217.1"/>
<line x1="61.0" y1="234.0" x2="72.8" y2="217.3"/>
<line x1="61.0" y1="234.0" x2="72.4" y2="220.2"/>
<line x1="61.0" y1="234.0" x2="79.8" y2="216.0"/>
<line x1="61.0" y1="234.0" x2="76.1" y2="223.2"/>
<line x1="61.0" y1="234.0" x2="85.0" y2="221.8"/>
<line x1="61.0" y1="234.0" x2="77.3" y2="227.0"/>
<line x1="61.0" y1="234.0" x2="77.3" y2="228.6"/>
<line x1="61.0" y1="234.0" x2="77.9" y2="230.8"/>
<line x1="61.0" y1="234.0" x2="79.9" y2="232.3"/>
</g>
<path d="M80.1 234.1 L80.6 242.0 L79.9 252.3 L70.4 250.6 L65.6 255.4 L56.3 257.3 L51.7 253.4 L42.6 251.3 L38.6 242.3 L38.4 234.3 L36.5 228.1 L46.1 223.5 L46.1 212.6 L55.5 213.7 L62.6 216.5 L69.0 216.8 L72.4 220.2 L85.0 221.8 L77.9 230.8 Z" fill="none" stroke="#e4e428" stroke-width="0.6" opacity="0.6"/>
<circle cx="61" cy="234" r="7" fill="#e8f030"/>
<circle cx="61" cy="234" r="4" fill="#000"/>
<path d="M70 210 L98 203 L110 222 L98 236 L85 232" fill="none" stroke="#e4e428" stroke-width="0.7" opacity="0.7"/>

<!-- purple / gray guide lines -->
<line x1="184" y1="148" x2="184" y2="282" stroke="#8a8aa0" stroke-width="1.1"/>
<line x1="184" y1="114" x2="184" y2="180" stroke="#a030b8" stroke-width="1.4"/>
<line x1="37" y1="288.8" x2="46" y2="288.8" stroke="#a030b8" stroke-width="1.6"/>
<line x1="46" y1="288.8" x2="143" y2="288.8" stroke="#8aa0aa" stroke-width="1"/>
<line x1="296" y1="288.8" x2="391" y2="288.8" stroke="#7a9aa6" stroke-width="1.2"/>
<line x1="391" y1="288.8" x2="462" y2="288.8" stroke="#a030c0" stroke-width="1.6"/>
<!-- diagonal gray lines -->
<g stroke="#bdbdbd" stroke-width="1">
 <line x1="38" y1="383" x2="64" y2="368"/>
 <line x1="242" y1="260.5" x2="327.5" y2="208.5"/>
 <line x1="242" y1="288" x2="332" y2="341.5"/>
 <line x1="376" y1="367.5" x2="440" y2="406"/>
</g>
<!-- garden text -->
<text x="92" y="242.5" font-family="Liberation Sans" font-style="italic" font-size="10px" fill="#e0e0e0" letter-spacing="3.6">Garden</text>
<!-- A marker -->
<path d="M170 104.5 L176.5 99.8 L176.5 109.2 Z" fill="#a8d0d8"/>
<path d="M180.5 96 L183.8 91.5 L186 96 Z" fill="#b8d8b0"/>
<path d="M180.5 113 L187 113 L183.8 117.5 Z" fill="#c8a8d8"/>
<path d="M180.3 94.6 L188.3 94.6 L193.9 100.2 L193.9 108.2 L188.3 113.8 L180.3 113.8 L174.7 108.2 L174.7 100.2 Z" fill="none" stroke="#d0b02a" stroke-width="1.2"/>
<text x="176" y="110" font-family="Liberation Sans" font-style="italic" font-size="14px" fill="#2ed0e4" stroke="#2ed0e4" stroke-width="0.5">A</text>
<text x="195.5" y="107.2" font-family="Liberation Sans" font-style="italic" font-size="10.2px" fill="#e8e8e8" stroke="#e8e8e8" stroke-width="0.3" letter-spacing="0.9">H = 4</text>
<!-- terrace -->
<ellipse cx="333.5" cy="251.5" rx="49" ry="44.5" fill="none" stroke="#ee1010" stroke-width="4"/>
<text x="306" y="252" font-family="Liberation Sans" font-style="italic" font-weight="bold" font-size="10.5px" fill="#eeeeee" letter-spacing="2.5">Terrace</text>
<!-- vertical lines right -->
<g stroke="#c8c8c8" stroke-width="1">
 <line x1="440.5" y1="66" x2="440.5" y2="441"/>
 <line x1="450" y1="66" x2="450" y2="441"/>
 <line x1="497" y1="66" x2="497" y2="441"/>
 <line x1="523.3" y1="66" x2="523.3" y2="441"/>
 <line x1="550.3" y1="66" x2="550.3" y2="441"/>
 <line x1="586.8" y1="66" x2="586.8" y2="441"/>
</g>
<!-- C marker -->
<path d="M458 288.5 L465 288.5 L463.5 293 Z" fill="#b0dcd0"/>
<path d="M481 287.5 L488.5 287.5 L482.5 294 Z" fill="#a8d8e0"/>
<path d="M468.5 297 L479 297 L473.8 301 Z" fill="#c8e8c0"/>
<path d="M469.6 278.5 L477.4 278.5 L482.9 284 L482.9 291.8 L477.4 297.3 L469.6 297.3 L464.1 291.8 L464.1 284 Z" fill="#000" stroke="#d8b428" stroke-width="1.3"/>
<text x="467.3" y="293.3" font-family="Liberation Sans" font-weight="bold" font-size="13.5px" fill="#2ec0dc">C</text>
<!-- bottom lines -->
<g stroke="#d0d0d0" stroke-width="1" fill="none">
 <line x1="37" y1="406.8" x2="116.5" y2="406.8"/>
 <line x1="166.5" y1="406.8" x2="271" y2="406.8"/>
 <line x1="324" y1="406.8" x2="450" y2="406.8"/>
 <line x1="459" y1="406.8" x2="497" y2="406.8"/>
 <line x1="37" y1="423.6" x2="215" y2="423.6"/>
 <line x1="228" y1="423.6" x2="440" y2="423.6"/>
 <rect x="36" y="426.8" width="16.5" height="3.3"/>
 <rect x="45.3" y="432" width="47.2" height="3.5"/>
 <rect x="127" y="432" width="47" height="3.5"/>
 <rect x="167" y="426.8" width="48" height="3.5"/>
 <rect x="215.3" y="416.5" width="12.5" height="26"/>
 <rect x="228" y="426.5" width="49" height="3.5"/>
 <rect x="270.3" y="432" width="53.5" height="3.5"/>
 <rect x="340.3" y="432" width="54.4" height="3.3"/>
 <rect x="386.3" y="426.9" width="52" height="3"/>
 <line x1="438.3" y1="424" x2="438.3" y2="433.5"/>
 <line x1="62" y1="438.6" x2="81" y2="438.6"/>
 <line x1="149" y1="438.6" x2="167" y2="438.6"/>
 <line x1="272" y1="438.6" x2="290" y2="438.6"/>
 <line x1="359" y1="438.6" x2="376" y2="438.6"/>
</g>
<g fill="#d0d0d0">
 <path d="M64.5 438 L68 438 L66.2 440.5 Z"/>
 <path d="M161.5 438 L165 438 L163.2 440.5 Z"/>
 <path d="M281 438 L284.5 438 L282.7 440.5 Z"/>
 <path d="M367 438 L370.5 438 L368.7 440.5 Z"/>
</g>
<path d="M493 404 L498 407 L493 410" fill="none" stroke="#d0d0d0" stroke-width="1"/>
<!-- anchors -->
<g stroke="#d8d8d8" stroke-width="1.2" fill="none">
 <line x1="111.7" y1="417" x2="111.7" y2="429"/>
 <ellipse cx="111.7" cy="416" rx="1.4" ry="2.5" fill="#d8d8d8" stroke="none"/>
 <circle cx="111.7" cy="423.6" r="1.6" fill="#d8d8d8" stroke="none"/>
 <path d="M105.6 427 Q108 429.8 111.7 429.8 Q115.4 429.8 117.6 427"/>
 <line x1="331.5" y1="417" x2="331.5" y2="429"/>
 <ellipse cx="331.5" cy="416" rx="1.4" ry="2.5" fill="#d8d8d8" stroke="none"/>
 <circle cx="331.5" cy="423.6" r="1.6" fill="#d8d8d8" stroke="none"/>
 <path d="M325.4 427 Q327.8 429.8 331.5 429.8 Q335.2 429.8 337.4 427"/>
</g>
</svg>
</div>

<!-- status -->
<div class="a status"></div>
<div class="a" style="left:17px;top:445px;width:297px;height:21px;border-top:1px solid #a0a0a0;border-left:1px solid #a0a0a0;border-right:1px solid #fff;border-bottom:1px solid #fff"></div>
<svg class="a" style="left:0;top:440px" width="320" height="30" viewBox="0 440 320 30"><text x="20" y="459.5" font-family="Liberation Sans" font-size="12.2px" fill="#262626" textLength="82.7" lengthAdjust="spacingAndGlyphs">Select an Option</text></svg>

<!-- status buttons -->
<div class="a" style="left:482px;top:441px;width:144px;height:27px;background:#f0f0f0"></div>
<div class="a" style="left:482px;top:443px;width:1px;height:24px;background:#fff"></div>
<div class="a" style="left:482px;top:466px;width:144px;height:2px;background:#8c8c8c"></div>
<div class="a" style="left:504px;top:443px;width:2px;height:25px;background:#8c8c8c"></div>
<div class="a" style="left:528.5px;top:443px;width:2px;height:25px;background:#8c8c8c"></div>
<div class="a" style="left:552.5px;top:443px;width:2px;height:25px;background:#8c8c8c"></div>
<div class="a" style="left:576.5px;top:443px;width:2px;height:25px;background:#8c8c8c"></div>
<div class="a" style="left:600.5px;top:443px;width:2px;height:25px;background:#8c8c8c"></div>
<div class="a" style="left:624.5px;top:443px;width:2px;height:25px;background:#8c8c8c"></div>
<div class="a" style="left:506px;top:443px;width:1px;height:23px;background:#fff"></div>
<div class="a" style="left:530.5px;top:443px;width:1px;height:23px;background:#fff"></div>
<div class="a" style="left:554.5px;top:443px;width:1px;height:23px;background:#fff"></div>
<div class="a" style="left:578.5px;top:443px;width:1px;height:23px;background:#fff"></div>
<div class="a" style="left:602.5px;top:443px;width:1px;height:23px;background:#fff"></div>
<svg class="a" style="left:480px;top:436px" width="150" height="34" viewBox="480 436 150 34">
 <!-- T -->
 <rect x="488" y="449.2" width="11.3" height="2.6" fill="#0c0c86"/>
 <rect x="491.8" y="449.2" width="3.6" height="13.6" fill="#0c0c86"/>
 <!-- x -->
 <path d="M514.3 452.6 L521 459.2 M521 452.6 L514.3 459.2" stroke="#000" stroke-width="2.1"/>
 <!-- cube -->
 <path d="M541 449 L547 452.3 L547 460.5 L541 464 L535 460.5 L535 452.3 Z" fill="#1a7a30"/>
 <path d="M541 449.8 L546.3 452.6 L541 456 L535.7 452.6 Z" fill="#f0f020"/>
 <path d="M535.7 452.9 L540.6 456.3 L540.6 463 L535.7 460.2 Z" fill="#20d020"/>
 <path d="M541.4 456.3 L546.3 452.9 L546.3 460.2 L541.4 463 Z" fill="#3c8ce8"/>
 <!-- layout -->
 <rect x="558.5" y="450" width="15.5" height="12" fill="#fff" stroke="#2a2aa0" stroke-width="1.2"/>
 <path d="M567 462 L567 456 L574 456" fill="none" stroke="#2a2aa0" stroke-width="1.1"/>
 <line x1="569" y1="458.3" x2="573" y2="458.3" stroke="#2a2aa0" stroke-width="0.8"/>
 <line x1="569" y1="460.3" x2="573" y2="460.3" stroke="#2a2aa0" stroke-width="0.8"/>
 <!-- color grid -->
 <rect x="582" y="450.2" width="14.5" height="11.6" fill="#111"/>
 <rect x="583" y="451.2" width="4.2" height="3.2" fill="#e82020"/>
 <rect x="587.2" y="451.2" width="4.2" height="3.2" fill="#20c020"/>
 <rect x="591.4" y="451.2" width="4.1" height="3.2" fill="#30a0c0"/>
 <rect x="583" y="454.4" width="4.2" height="3.2" fill="#f0f020"/>
 <rect x="587.2" y="454.4" width="4.2" height="3.2" fill="#f8f8f8"/>
 <rect x="591.4" y="454.4" width="4.1" height="3.2" fill="#e82020"/>
 <rect x="583" y="457.6" width="4.2" height="3.2" fill="#20e0e0"/>
 <rect x="587.2" y="457.6" width="4.2" height="3.2" fill="#208040"/>
 <rect x="591.4" y="457.6" width="4.1" height="3.2" fill="#f0e020"/>
 <!-- toolbox -->
 <rect x="605.7" y="450" width="15.8" height="12" fill="#14147a"/>
 <path d="M609 453 Q613.5 450.8 618 453" fill="none" stroke="#e0e0ff" stroke-width="1"/>
 <rect x="608.3" y="454" width="10.5" height="5.5" fill="none" stroke="#e0e0ff" stroke-width="1"/>
 <line x1="609" y1="456.5" x2="618" y2="456.5" stroke="#e0e0ff" stroke-width="0.8"/>
 <rect x="612.3" y="455.5" width="2.5" height="2" fill="#e0e0ff"/>
 <!-- watermark dots -->
 <circle cx="500.5" cy="444.3" r="7" fill="#64c4ea" opacity="0.72"/>
 <circle cx="522" cy="444.3" r="7" fill="#bcbcbc" opacity="0.72"/>
 <circle cx="544" cy="444.3" r="7" fill="#a8d078" opacity="0.72"/>
 <circle cx="566" cy="444.3" r="7" fill="#f0b860" opacity="0.72"/>
 <circle cx="588.3" cy="444.3" r="7" fill="#64a8d8" opacity="0.72"/>
 <circle cx="610.8" cy="444.3" r="7" fill="#e06060" opacity="0.72"/>
</svg>

<!-- Find Text dialog -->
<div class="a" style="left:238px;top:63px;width:384px;height:134px;border-radius:6px 6px 4px 4px;border:1px solid rgba(190,190,190,.85);
 background:
 linear-gradient(to bottom, rgba(0,0,0,0) 0, rgba(0,0,0,0) 52px, rgba(40,42,46,.55) 54px, rgba(25,27,30,.85) 90px, rgba(20,22,26,1) 100%),
 linear-gradient(to right, rgba(215,215,215,.85) 0, rgba(190,190,190,.7) 40px, rgba(120,120,120,.35) 70px, rgba(20,22,26,0) 120px),
 linear-gradient(to bottom, #3a3d42 0, #202328 30px, #15181c 100%);"></div>
<div class="a" style="left:450px;top:64px;width:171px;height:54px;border-radius:0 6px 0 0;background:linear-gradient(100deg, rgba(0,0,0,0) 0, rgba(0,0,0,0) 40%, rgba(150,150,150,.3) 75%, rgba(120,120,120,.45) 100%)"></div>
<div class="a" style="left:600px;top:118px;width:21px;height:78px;border-radius:0 0 4px 0;background:linear-gradient(to bottom, rgba(110,110,110,.45) 0, rgba(80,80,80,.25) 40%, rgba(0,0,0,0) 100%)"></div>
<div class="a" style="left:244px;top:92px;width:373px;height:100px;border:1px solid #2a2a2a;background:#f0f0f0;border-top-color:#555;"></div>
<div class="a" style="left:245px;top:93px;width:371px;height:98px;border-left:1px solid #fff;border-bottom:1px solid #fff;border-right:1px solid #fafafa"></div>
<div class="a" style="left:246px;top:71px;font-size:12.2px;color:#111;text-shadow:0 0 6px rgba(255,255,255,.9),0 0 10px rgba(255,255,255,.6)">Find Text</div>
<!-- close -->
<div class="a" style="left:565px;top:63.5px;width:51px;height:20px;border-radius:0 0 4px 4px;border:1px solid rgba(80,40,30,.8);
 background:linear-gradient(to bottom,#e6a08a 0,#d9806a 45%,#c8321a 50%,#c4301a 80%,#d86a4a 100%);box-shadow:inset 0 0 0 1px rgba(255,200,180,.35)"></div>
<svg class="a" style="left:584px;top:68px" width="13" height="11" viewBox="0 0 13 11"><path d="M1.5 1 L11.5 10 M11.5 1 L1.5 10" stroke="#fff" stroke-width="2.8"/></svg>

<!-- edit -->
<div class="a" style="left:319px;top:98px;width:200px;height:20px;background:#fff;border-top:2px solid #808080;border-left:2px solid #808080;border-right:1px solid #fff;border-bottom:1px solid #fff;box-shadow:inset 1px 1px 0 #404040"></div>
<!-- Next -->
<div class="a" style="left:531px;top:98.5px;width:78px;height:23.5px;border:1px solid #606060;background:#f0f0f0;box-shadow:inset 1px 1px 0 #fff, inset -2px -2px 0 #909090"></div>
<div class="a" style="left:535px;top:103px;width:70px;height:14.5px;border:1px dotted #303030"></div>
<!-- Cancel -->
<div class="a" style="left:531px;top:128.5px;width:78px;height:24.5px;background:#f0f0f0;border-top:1px solid #fff;border-left:1px solid #fff;border-right:2px solid #909090;border-bottom:2px solid #909090"></div>
<!-- checkboxes -->
<div class="a" style="left:252px;top:126px;width:18px;height:35px;border-top:2px solid #7a7a7a;border-left:2px solid #7a7a7a;border-right:1px solid #e4e4e4;background:#fcfcfc"></div>
<div class="a" style="left:252px;top:144px;width:18px;height:2px;background:#7a7a7a"></div>
<div class="a" style="left:415px;top:126.5px;width:18px;height:34.5px;border-top:2px solid #7a7a7a;border-left:2px solid #7a7a7a;border-right:1px solid #e4e4e4;background:#fcfcfc"></div>
<div class="a" style="left:415px;top:144px;width:18px;height:2px;background:#7a7a7a"></div>
<svg class="a" style="left:410px;top:140px" width="24" height="24" viewBox="410 140 24 24"><path d="M418.6 150.8 L421.9 153.6 L427.6 147.6 L427.6 151.2 L422 157.2 L418.6 153.8 Z" fill="#000"/></svg>
<!-- nav buttons -->
<div class="a" style="left:359px;top:167px;width:168px;height:18px;background:#f0f0f0;border-top:1px solid #fff;border-bottom:2px solid #888"></div>
<div class="a" style="left:359px;top:167px;width:1px;height:17px;background:#fff"></div>
<div class="a" style="left:381px;top:167px;width:2px;height:18px;background:#888"></div>
<div class="a" style="left:383px;top:167px;width:1px;height:16px;background:#fff"></div>
<div class="a" style="left:428px;top:167px;width:2px;height:18px;background:#888"></div>
<div class="a" style="left:430px;top:167px;width:1px;height:16px;background:#fff"></div>
<div class="a" style="left:456px;top:167px;width:2px;height:18px;background:#888"></div>
<div class="a" style="left:458px;top:167px;width:1px;height:16px;background:#fff"></div>
<div class="a" style="left:503px;top:167px;width:2px;height:18px;background:#888"></div>
<div class="a" style="left:505px;top:167px;width:1px;height:16px;background:#fff"></div>
<div class="a" style="left:525.5px;top:167px;width:2px;height:18px;background:#888"></div>
<svg class="a" style="left:356px;top:164px" width="176" height="24" viewBox="356 164 176 24">
 <g fill="none" stroke="#2a2a2a" stroke-width="1.25">
  <line x1="366.8" y1="170.8" x2="366.8" y2="181"/>
  <path d="M373.5 171.8 L368.9 175.9 L373.5 180.2"/>
  <path d="M407.8 173.4 L403.8 177 L407.8 180.6"/>
  <path d="M478.6 172.8 L482.8 176.5 L478.6 180.2"/>
  <path d="M513 171.8 L517.4 176 L513 180.2"/>
  <line x1="519.6" y1="170.8" x2="519.6" y2="181"/>
 </g>
 <rect x="443.1" y="173.3" width="1.4" height="1.4" fill="#2a2a2a"/>
 <rect x="443.1" y="178.8" width="1.4" height="1.4" fill="#2a2a2a"/>
</svg>
<svg class="a" style="left:0;top:0" width="640" height="480" viewBox="0 0 640 480"><g font-family="Liberation Sans" font-size="11.9px" fill="#0c0c0c"><text x="251.7" y="111.1" textLength="53.5" lengthAdjust="spacingAndGlyphs">Find What:</text><text x="323.2" y="113.0" textLength="38.5" lengthAdjust="spacingAndGlyphs">Terrace</text><text x="557.9" y="113.7" textLength="23.2" lengthAdjust="spacingAndGlyphs">Next</text><text x="553.1" y="144.0" textLength="35.1" lengthAdjust="spacingAndGlyphs">Cancel</text><text x="277.1" y="140.2" textLength="122.5" lengthAdjust="spacingAndGlyphs">Match Whole Word Only</text><text x="277.1" y="156.8" textLength="60.0" lengthAdjust="spacingAndGlyphs">Match Case</text><text x="439.7" y="139.7" textLength="61.7" lengthAdjust="spacingAndGlyphs">Screen Only</text><text x="439.4" y="156.6" textLength="53.2" lengthAdjust="spacingAndGlyphs">Auto-zoom</text><text x="533.3" y="181.0" textLength="24.9" lengthAdjust="spacingAndGlyphs">1 / 3</text></g></svg>

</body></html>
